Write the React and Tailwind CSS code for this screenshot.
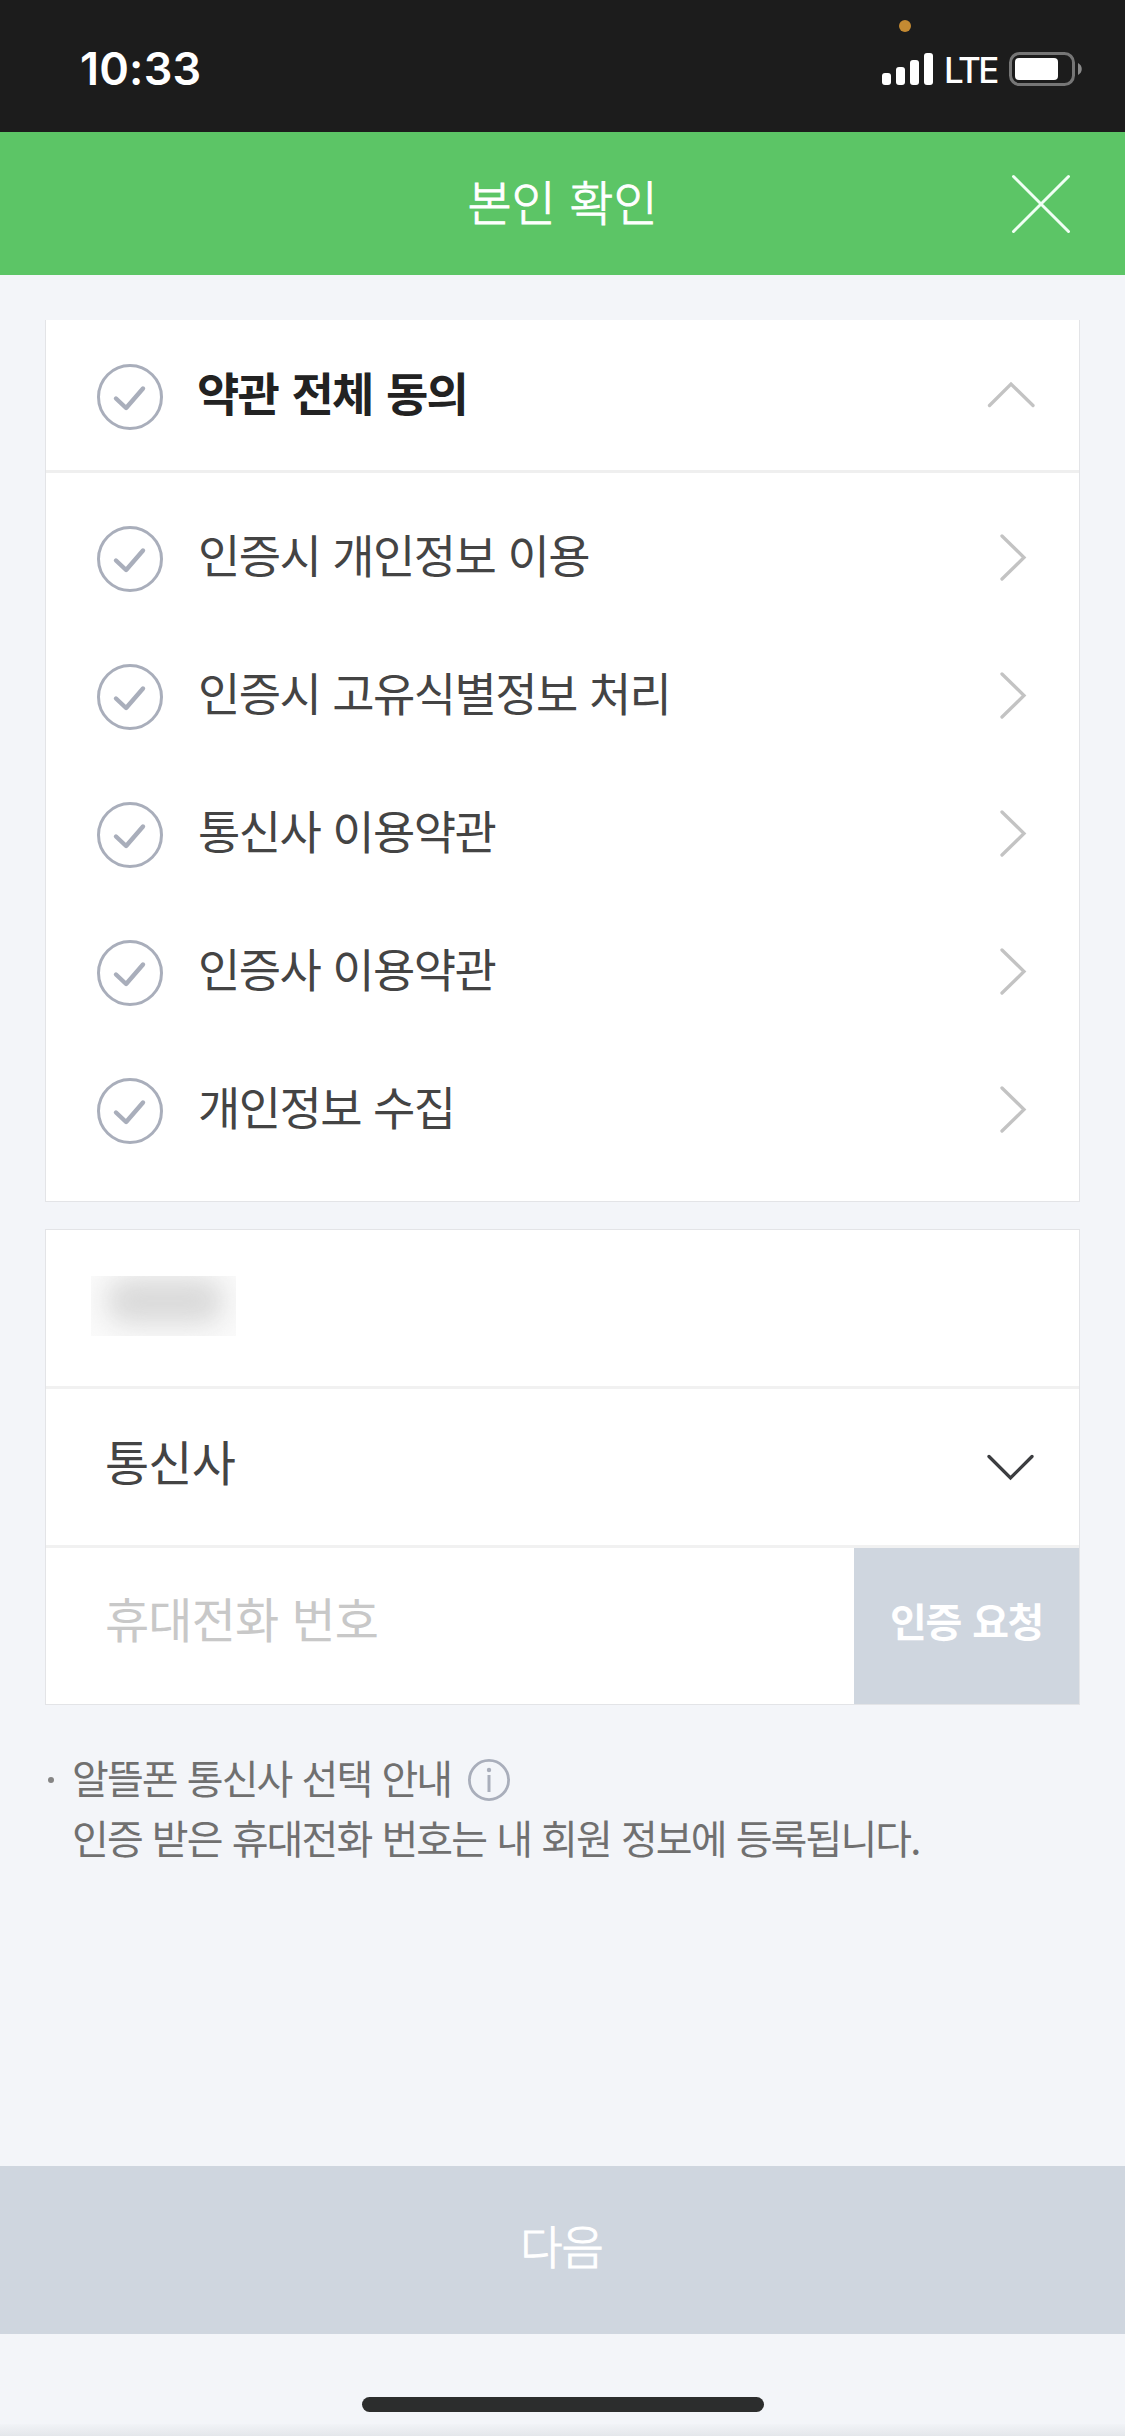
const terms = [
  "인증시 개인정보 이용",
  "인증시 고유식별정보 처리",
  "통신사 이용약관",
  "인증사 이용약관",
  "개인정보 수집",
];

function CheckCircle() {
  return (
    <svg className="mt-[3px] h-[66px] w-[66px] shrink-0" viewBox="0 0 66 66" fill="none" stroke="#a9aebb">
      <circle cx="33" cy="33" r="31.5" strokeWidth="3" />
      <path d="M19 34.500l10.100 9.500L46 24.500" strokeWidth="4.400" strokeLinecap="round" strokeLinejoin="round" />
    </svg>
  );
}

function StatusBar() {
  return (
    <div className="relative flex h-[132px] items-start bg-[#1c1c1c] text-white">
      <span className="ml-20 mt-[45px] font-['Inter'] text-[45px] leading-[48px] font-semibold tracking-[0.2px]">10:33</span>

      {/* Microphone in use */}
      <i className="absolute left-[899px] top-5 h-3 w-3 rounded-full bg-[#c48a32]"></i>

      <div className="ml-auto mr-[42px] mt-[52px] flex">
        <div className="mt-px flex h-8 items-end gap-[5px]">
          <i className="h-3 w-[9px] rounded-[3px] bg-white"></i>
          <i className="h-[18px] w-[9px] rounded-[3px] bg-white"></i>
          <i className="h-[25px] w-[9px] rounded-[3px] bg-white"></i>
          <i className="h-8 w-[9px] rounded-[3px] bg-white"></i>
        </div>
        <span className="ml-[11px] w-[65px] font-['Inter'] text-[35px] leading-[37px] font-medium tracking-[-2.500px]">LTE</span>
        <svg className="h-[34px] w-[74px]" viewBox="0 0 74 34">
          <rect x="1.5" y="1.5" width="63" height="31" rx="9" fill="none" stroke="#767676" strokeWidth="3" />
          <rect x="6" y="6" width="43" height="22" rx="4" fill="#fff" />
          <path d="M69 11c5 2.500 5 9.500 0 12z" fill="#8a8a8a" />
        </svg>
      </div>
    </div>
  );
}

export default function App() {
  return (
    <div className="flex h-[2436px] w-[1125px] flex-col bg-[#f3f5f9] font-['Noto_Sans_CJK_KR',sans-serif]">
      <StatusBar />

      {/* Header */}
      <header className="relative flex h-[143px] items-center justify-center bg-[#5cc566] pb-[7px]">
        <h1 className="text-[48px] leading-[60px] font-light text-white [-webkit-text-stroke:1px_#fff] [word-spacing:3px]">본인 확인</h1>
        <svg className="absolute right-[54px] top-[42px] h-[60px] w-[60px]" viewBox="0 0 60 60" stroke="#f0fff4" strokeWidth="3" strokeLinecap="round">
          <path d="M2.500 2.500l55 55M57.500 2.500l-55 55" />
        </svg>
      </header>

      {/* Terms */}
      <section className="mx-[45px] mt-[45px] h-[882px] border border-t-0 border-[#e3e4e7] bg-white">
        <div className="flex h-[153px] items-center border-b-3 border-[#efefef] pl-[51px] pr-11">
          <CheckCircle />
          <strong className="mb-2 ml-[34px] text-[46px] leading-[60px] font-bold tracking-[-1.700px] [word-spacing:4.500px] text-[#222]">약관 전체 동의</strong>
          <svg className="ml-auto h-7 w-12" viewBox="0 0 48 28" fill="none" stroke="#c3c3c3" strokeWidth="3.300" strokeLinecap="round">
            <path d="M2.500 24.500L24 3l22 21.500" />
          </svg>
        </div>
        <ul className="pt-[15px]">
          {terms.map((term) => (
            <li key={term} className="flex h-[138px] items-center pl-[51px] pr-[52px]">
              <CheckCircle />
              <span className="mb-2 ml-[35px] text-[46px] leading-[60px] tracking-[-1.600px] [word-spacing:3.500px] text-[#444]">{term}</span>
              <svg className="ml-auto h-12 w-7" viewBox="0 0 28 48" fill="none" stroke="#c3c3c3" strokeWidth="3.300" strokeLinecap="round">
                <path d="M3 3L25 24.500 3 46" />
              </svg>
            </li>
          ))}
        </ul>
      </section>

      {/* Form */}
      <section className="mx-[45px] mt-[27px] h-[476px] border border-[#e3e4e7] bg-white text-[48px] leading-[60px] tracking-[-0.800px] [word-spacing:3px]">
        <div className="h-[159px] border-b-3 border-[#f1f1f1] pl-[45px] pt-[46px]">
          <div className="h-[60px] w-[145px] overflow-hidden bg-[#fafafa]">
            <div className="ml-4 mt-0.5 h-[46px] w-[116px] rounded-[20px] bg-[#dadada] blur-[13px]"></div>
          </div>
        </div>
        <div className="flex h-[159px] items-center border-b-3 border-[#f1f1f1] pl-[59px] pr-11">
          <span className="mb-3.5 text-[#444]">통신사</span>
          <svg className="ml-auto h-7 w-12" viewBox="0 0 48 28" fill="none" stroke="#3c3d40" strokeWidth="3.300" strokeLinecap="round">
            <path d="M2 3.500L23.500 25 45 3.500" />
          </svg>
        </div>
        <div className="flex h-[156px]">
          <div className="flex flex-1 items-center pb-[18px] pl-[59px] text-[#c8c8c8]">휴대전화 번호</div>
          <button className="w-[225px] bg-[#cfd6df] pb-3 text-[40px] font-bold tracking-[-1.500px] text-white [word-spacing:4px]">인증 요청</button>
        </div>
      </section>

      {/* Notes */}
      <div className="ml-12 mt-[42px] flex text-[40px] leading-[60px] tracking-[-1.900px] text-[#707070] [word-spacing:3px]">
        <i className="mt-[30px] h-1.5 w-1.5 rounded-full bg-[#858585]"></i>
        <div className="ml-[18px]">
          <p className="flex items-center">
            알뜰폰 통신사 선택 안내
            <svg className="ml-[17px] mt-1.5 h-[42px] w-[42px]" viewBox="0 0 42 42" fill="none" stroke="#a9aebb">
              <circle cx="21" cy="21" r="19.600" strokeWidth="2.800" />
              <path d="M21 16v17" strokeWidth="3" />
              <circle cx="21" cy="11" r="2.200" fill="#a9aebb" stroke="none" />
            </svg>
          </p>
          <p>인증 받은 휴대전화 번호는 내 회원 정보에 등록됩니다.</p>
        </div>
      </div>

      {/* Footer */}
      <footer className="mt-auto">
        <button className="h-[168px] w-full bg-[#cfd6df] pb-3 pr-0.5 text-[46px] font-light tracking-[-1px] text-white [-webkit-text-stroke:1px_#fff]">다음</button>
        <div className="flex h-[102px] flex-col justify-between pt-[63px]">
          <div className="ml-[362px] h-[15px] w-[402px] rounded-full bg-[#2c2d2d]"></div>
          <div className="h-3 bg-linear-to-b from-[#f1f3f7] to-[#e4e7eb]"></div>
        </div>
      </footer>
    </div>
  );
}
